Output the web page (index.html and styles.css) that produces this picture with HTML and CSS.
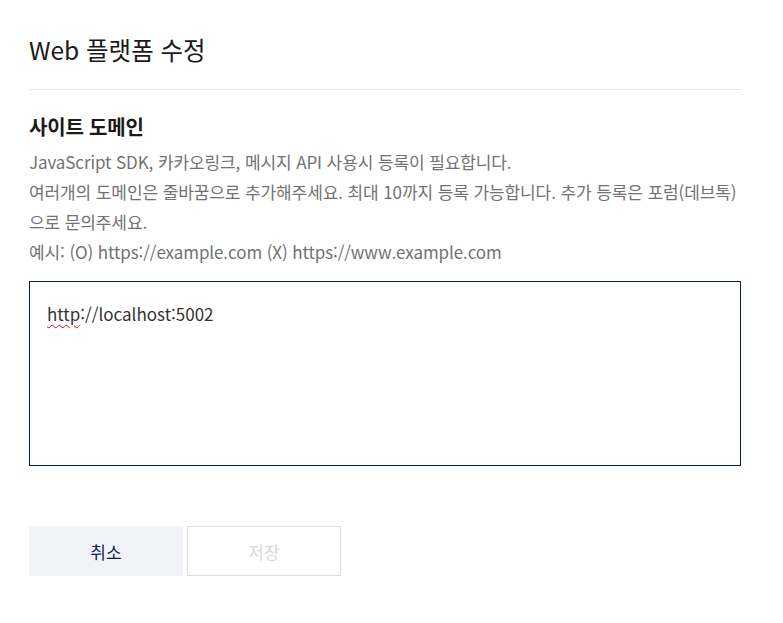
FILE: index.html
```html
<!DOCTYPE html>
<html lang="ko">
<head>
  <meta charset="UTF-8">
  <meta name="viewport" content="width=device-width, initial-scale=1.0">
  <title>Web 플랫폼 수정</title>
  <link rel="stylesheet" href="styles.css">
</head>
<body>
  <div class="dialog">
    <h1 class="dialog-title">Web 플랫폼 수정</h1>

    <div class="field">
      <h2 class="field-title">사이트 도메인</h2>
      <p class="field-desc">
        JavaScript SDK, 카카오링크, 메시지 API 사용시 등록이 필요합니다.<br>
        여러개의 도메인은 줄바꿈으로 추가해주세요. 최대 10까지 등록 가능합니다. 추가 등록은 포럼(데브톡)<br>으로 문의주세요.<br>
        예시: (O) https://example.com (X) https://www.example.com
      </p>
      <div class="domain-box"><span class="typo">http</span>://localhost:5002</div>
    </div>

    <div class="actions">
      <button type="button" class="btn btn-cancel">취소</button>
      <button type="button" class="btn btn-save" disabled>저장</button>
    </div>
  </div>
</body>
</html>
```

FILE: styles.css
```css
/* dialog layout */
body {
  margin: 0;
  background: #fff;
  font-family: "Noto Sans CJK KR", "Noto Sans", sans-serif;
  color: #1a1a1a;
}

.dialog {
  width: 712px;
  padding: 32px 0 0 29px;
}

.dialog-title {
  margin: 0;
  padding-bottom: 21px;
  font-size: 24.5px;
  font-weight: 400;
  line-height: 36px;
  border-bottom: 1px solid #e6e6e6;
}

.field {
  padding-top: 20px;
}

.field-title {
  margin: 0;
  font-size: 20px;
  font-weight: 700;
  line-height: 33px;
  letter-spacing: -0.2px;
}

.field-desc {
  margin: 0;
  padding-top: 4px;
  font-size: 17px;
  line-height: 30px;
  color: #727272;
  letter-spacing: -0.1px;
  white-space: nowrap;
}

.domain-box {
  box-sizing: border-box;
  height: 185px;
  margin-top: 14px;
  padding: 18px 17px;
  border: 1px solid #0b1a5c;
  font-size: 17px;
  line-height: 28px;
  color: #333;
}

.typo {
  text-decoration: underline wavy #e00;
  text-decoration-thickness: 1px;
  text-underline-offset: 3px;
}

.actions {
  display: flex;
  gap: 4px;
  margin-top: 60px;
}

.btn {
  width: 154px;
  height: 50px;
  font-family: inherit;
  font-size: 17px;
  cursor: pointer;
}

.btn-cancel {
  background: #f2f3f8;
  border: none;
  color: #0b1a5c;
}

.btn-save {
  background: #fff;
  border: 1px solid #ddd;
  color: #d8d8d8;
}
```
